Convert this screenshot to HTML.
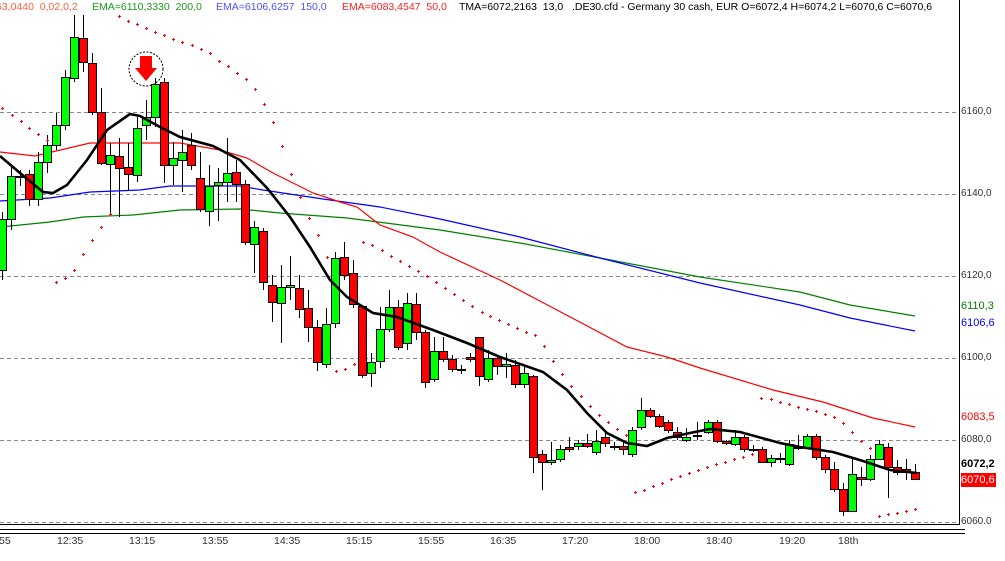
<!DOCTYPE html>
<html><head><meta charset="utf-8"><style>
html,body{margin:0;padding:0;background:#fff;}
body{width:1005px;height:561px;overflow:hidden;position:relative;font-family:"Liberation Sans",sans-serif;}
.t{position:absolute;font-size:10.5px;white-space:pre;line-height:12px;}
.ax{position:absolute;left:961px;font-size:10px;color:#333;line-height:12px;}
.tl{position:absolute;top:535px;font-size:10.5px;color:#333;}
</style></head><body>
<svg id="s" width="1005" height="561" style="position:absolute;left:0;top:0" xmlns="http://www.w3.org/2000/svg">
<g stroke="#888" stroke-dasharray="4,3" stroke-width="1">
<line x1="0" y1="112.5" x2="959" y2="112.5"/><line x1="0" y1="194.5" x2="959" y2="194.5"/>
<line x1="0" y1="276.5" x2="959" y2="276.5"/><line x1="0" y1="358.5" x2="959" y2="358.5"/>
<line x1="0" y1="440.5" x2="959" y2="440.5"/><line x1="0" y1="522.5" x2="959" y2="522.5"/>
</g>
<line x1="959.5" y1="0" x2="959.5" y2="525" stroke="#000"/>
<line x1="0" y1="524.5" x2="960" y2="524.5" stroke="#000"/>
<line x1="0" y1="529.5" x2="965" y2="529.5" stroke="#000"/>
<line x1="0" y1="533.5" x2="965" y2="533.5" stroke="#000"/>
<polyline fill="none" stroke="#008000" stroke-width="1.2" points="0,227 50,222 83,217 133,215 180,210 240,209 280,213 347,218 440,230 520,243 600,258 700,277 800,292 850,305 915,316"/>
<polyline fill="none" stroke="#0000ff" stroke-width="1.2" points="0,201 50,198 90,192 140,190 170,186 240,186 263,190 323,199 380,207 440,219 520,237 600,258 700,283 800,305 850,318 915,331"/>
<polyline fill="none" stroke="#ff0000" stroke-width="1.2" points="0,152 35,156 90,143 155,143 180,143 220,150 247,158 273,173 313,193 340,202 357,207 380,225 413,237 440,252 500,280 557,310 627,347 667,357 700,368 773,390 823,402 873,418 915,427"/>
<g id="candles"></g>
<polyline fill="none" stroke="#000" stroke-width="2.6" points="0,156 20,173 43,192 53,193 67,185 87,160 107,130 130,114 140,116 160,127 180,137 213,146 240,160 267,188 290,217 310,247 330,280 347,297 373,313 397,317 433,330 467,343 500,357 543,372 567,390 587,413 607,433 627,443 647,446 667,438 690,433 710,429 740,432 780,443 800,447 833,452 863,461 890,470 917,473"/>
<g id="dots" fill="#f00"></g>
<circle cx="146" cy="69" r="17" fill="none" stroke="#000" stroke-dasharray="2,1.5"/>
<polygon points="140,56 152,56 152,68 157,68 146,81 135,68 140,68" fill="#f00"/>
<rect x="961" y="473" width="35" height="14" fill="#f00"/>
</svg>
<div class="t" style="left:-4px;top:1px;color:#ff6040">63,0440  0,02,0,2</div>
<div class="t" style="left:92px;top:1px;color:#1a9a1a">EMA=6110,3330  200,0</div>
<div class="t" style="left:216px;top:1px;color:#5050ff">EMA=6106,6257  150,0</div>
<div class="t" style="left:342px;top:1px;color:#ff2020">EMA=6083,4547  50,0</div>
<div class="t" style="left:459px;top:1px;color:#000">TMA=6072,2163  13,0   .DE30.cfd - Germany 30 cash, EUR O=6072,4 H=6074,2 L=6070,6 C=6070,6</div>
<div class="ax" style="top:106px">6160,0</div>
<div class="ax" style="top:188px">6140,0</div>
<div class="ax" style="top:270px">6120,0</div>
<div class="ax" style="top:352px">6100,0</div>
<div class="ax" style="top:434px">6080,0</div>
<div class="ax" style="top:516px;height:8px;overflow:hidden">6060,0</div>
<div class="ax" style="top:300px;color:#008000;font-size:11px">6110,3</div>
<div class="ax" style="top:317px;color:#0000ff;font-size:11px">6106,6</div>
<div class="ax" style="top:411px;color:#ff0000;font-size:11px">6083,5</div>
<div class="ax" style="top:458px;color:#000;font-size:11px;font-weight:bold">6072,2</div>
<div class="ax" style="top:474px;color:#fff;font-size:11px">6070,6</div>
<div class="tl" style="left:-1px">55</div>
<div class="tl" style="left:57px">12:35</div>
<div class="tl" style="left:129px">13:15</div>
<div class="tl" style="left:202px">13:55</div>
<div class="tl" style="left:274px">14:35</div>
<div class="tl" style="left:346px">15:15</div>
<div class="tl" style="left:418px">15:55</div>
<div class="tl" style="left:490px">16:35</div>
<div class="tl" style="left:562px">17:20</div>
<div class="tl" style="left:634px">18:00</div>
<div class="tl" style="left:706px">18:40</div>
<div class="tl" style="left:779px">19:20</div>
<div class="tl" style="left:838px">18th</div>
<script>
var C=[[2,212,280,219,270,1],[11,165,230,176,219,1],[20,170,186,176,177,1],[29,170,206,174,199,0],[38,152,206,162,199,1],[47,135,173,145,162,1],[56,113,150,125,145,1],[65,70,130,77,125,1],[74,15,82,37,78,1],[83,15,72,38,62,0],[92,53,115,63,112,0],[101,88,165,112,163,0],[110,143,213,155,164,1],[119,138,217,156,168,0],[128,143,190,167,174,0],[137,117,182,128,175,1],[146,100,140,117,125,1],[155,78,127,84,117,1],[164,78,183,82,165,0],[173,142,185,158,165,1],[182,130,192,152,160,1],[191,133,170,145,165,0],[200,152,212,178,209,0],[209,165,226,186,211,1],[218,168,221,182,185,1],[227,138,202,173,182,1],[236,160,202,172,184,0],[245,180,245,184,242,0],[254,221,273,227,244,1],[263,228,290,231,282,0],[272,275,322,285,302,0],[281,265,343,287,303,1],[290,256,300,285,287,1],[299,275,318,288,309,0],[308,290,342,308,327,0],[317,320,371,327,362,0],[326,308,368,324,364,1],[335,252,328,258,323,1],[344,242,280,257,275,0],[353,260,308,273,304,0],[362,305,378,306,375,0],[371,353,387,362,373,1],[380,307,368,329,361,1],[389,290,332,307,329,1],[398,300,350,307,347,0],[407,293,350,303,343,1],[416,293,340,304,332,0],[425,330,388,332,382,0],[434,337,382,351,379,1],[443,337,362,351,359,0],[452,355,372,359,369,0],[461,365,374,369,370,1],[470,353,362,357,359,0],[479,337,386,337,376,0],[488,350,382,358,379,1],[497,355,375,358,366,0],[506,353,378,364,366,1],[515,360,388,365,384,0],[524,365,388,373,384,1],[533,375,473,376,457,0],[542,450,490,454,462,0],[551,442,465,460,462,1],[560,445,462,449,459,1],[569,437,452,447,449,0],[578,440,450,443,446,1],[587,434,448,443,446,0],[596,430,455,441,452,1],[605,432,447,437,443,0],[614,442,450,446,447,1],[623,442,455,446,449,0],[632,427,457,430,454,1],[641,398,430,410,427,1],[650,408,418,410,416,0],[659,414,428,416,426,0],[668,420,433,422,430,0],[677,427,440,432,437,0],[686,428,442,437,440,1],[697,422,440,435,436,1],[708,420,434,422,432,1],[717,420,443,422,441,0],[726,440,445,441,443,0],[735,430,446,437,444,1],[744,435,452,437,449,0],[753,445,452,449,450,1],[762,447,463,449,462,0],[771,455,467,458,462,1],[780,453,463,458,459,0],[789,440,466,444,464,1],[798,435,450,447,448,1],[807,434,449,436,447,1],[816,434,460,436,457,0],[825,455,473,457,469,0],[834,462,492,469,489,0],[843,483,516,489,511,0],[852,458,512,474,511,1],[861,467,486,477,479,0],[870,455,481,459,479,1],[879,440,460,444,459,1],[888,443,498,447,467,0],[897,460,475,467,472,0],[906,459,480,469,472,0],[915,464,480,472,479,0]];
var ns="http://www.w3.org/2000/svg",g=document.getElementById("candles"),h="";
C.forEach(function(c){h+='<line x1="'+(c[0]+.5)+'" y1="'+c[1]+'" x2="'+(c[0]+.5)+'" y2="'+c[2]+'" stroke="#000"/>';
var bh=Math.max(c[4]-c[3],1);h+='<rect x="'+(c[0]-3.5)+'" y="'+(c[3]+.5)+'" width="8" height="'+bh+'" fill="'+(c[5]?'#00ff00':'#ff0000')+'" stroke="#000"/>';});
g.innerHTML=h;
var D=[[2,108],[12,115],[21,121],[29,128],[38,134],[47,140],[56,282],[65,278],[74,270],[83,254],[92,240],[101,227],[110,214],[119,16],[128,21],[137,24],[146,28],[155,32],[164,35],[173,39],[182,42],[192,45],[201,49],[210,53],[219,61],[228,66],[237,73],[246,79],[255,89],[264,104],[273,122],[282,146],[291,174],[300,197],[309,218],[318,235],[327,257],[336,371],[345,369],[354,364],[363,242],[372,245],[382,250],[391,256],[400,261],[409,266],[418,271],[427,276],[436,282],[445,288],[454,294],[463,300],[472,306],[482,312],[490,316],[499,320],[508,324],[517,328],[526,332],[535,335],[544,346],[553,361],[562,374],[571,386],[581,396],[590,406],[599,415],[608,422],[617,429],[626,435],[635,492],[644,490],[653,486],[662,483],[671,479],[680,476],[689,473],[698,470],[707,467],[716,464],[725,462],[734,459],[743,457],[752,454],[761,398],[771,399],[780,402],[789,404],[798,407],[807,409],[816,411],[825,414],[834,417],[843,423],[852,432],[861,441],[870,448],[879,516],[888,514],[897,513],[906,511],[915,509]];
var d="";D.forEach(function(p){d+='<rect x="'+(p[0]-1)+'" y="'+p[1]+'" width="3" height="1"/><rect x="'+p[0]+'" y="'+(p[1]-1)+'" width="1" height="3"/>';});
document.getElementById("dots").innerHTML=d;
</script>
</body></html>
